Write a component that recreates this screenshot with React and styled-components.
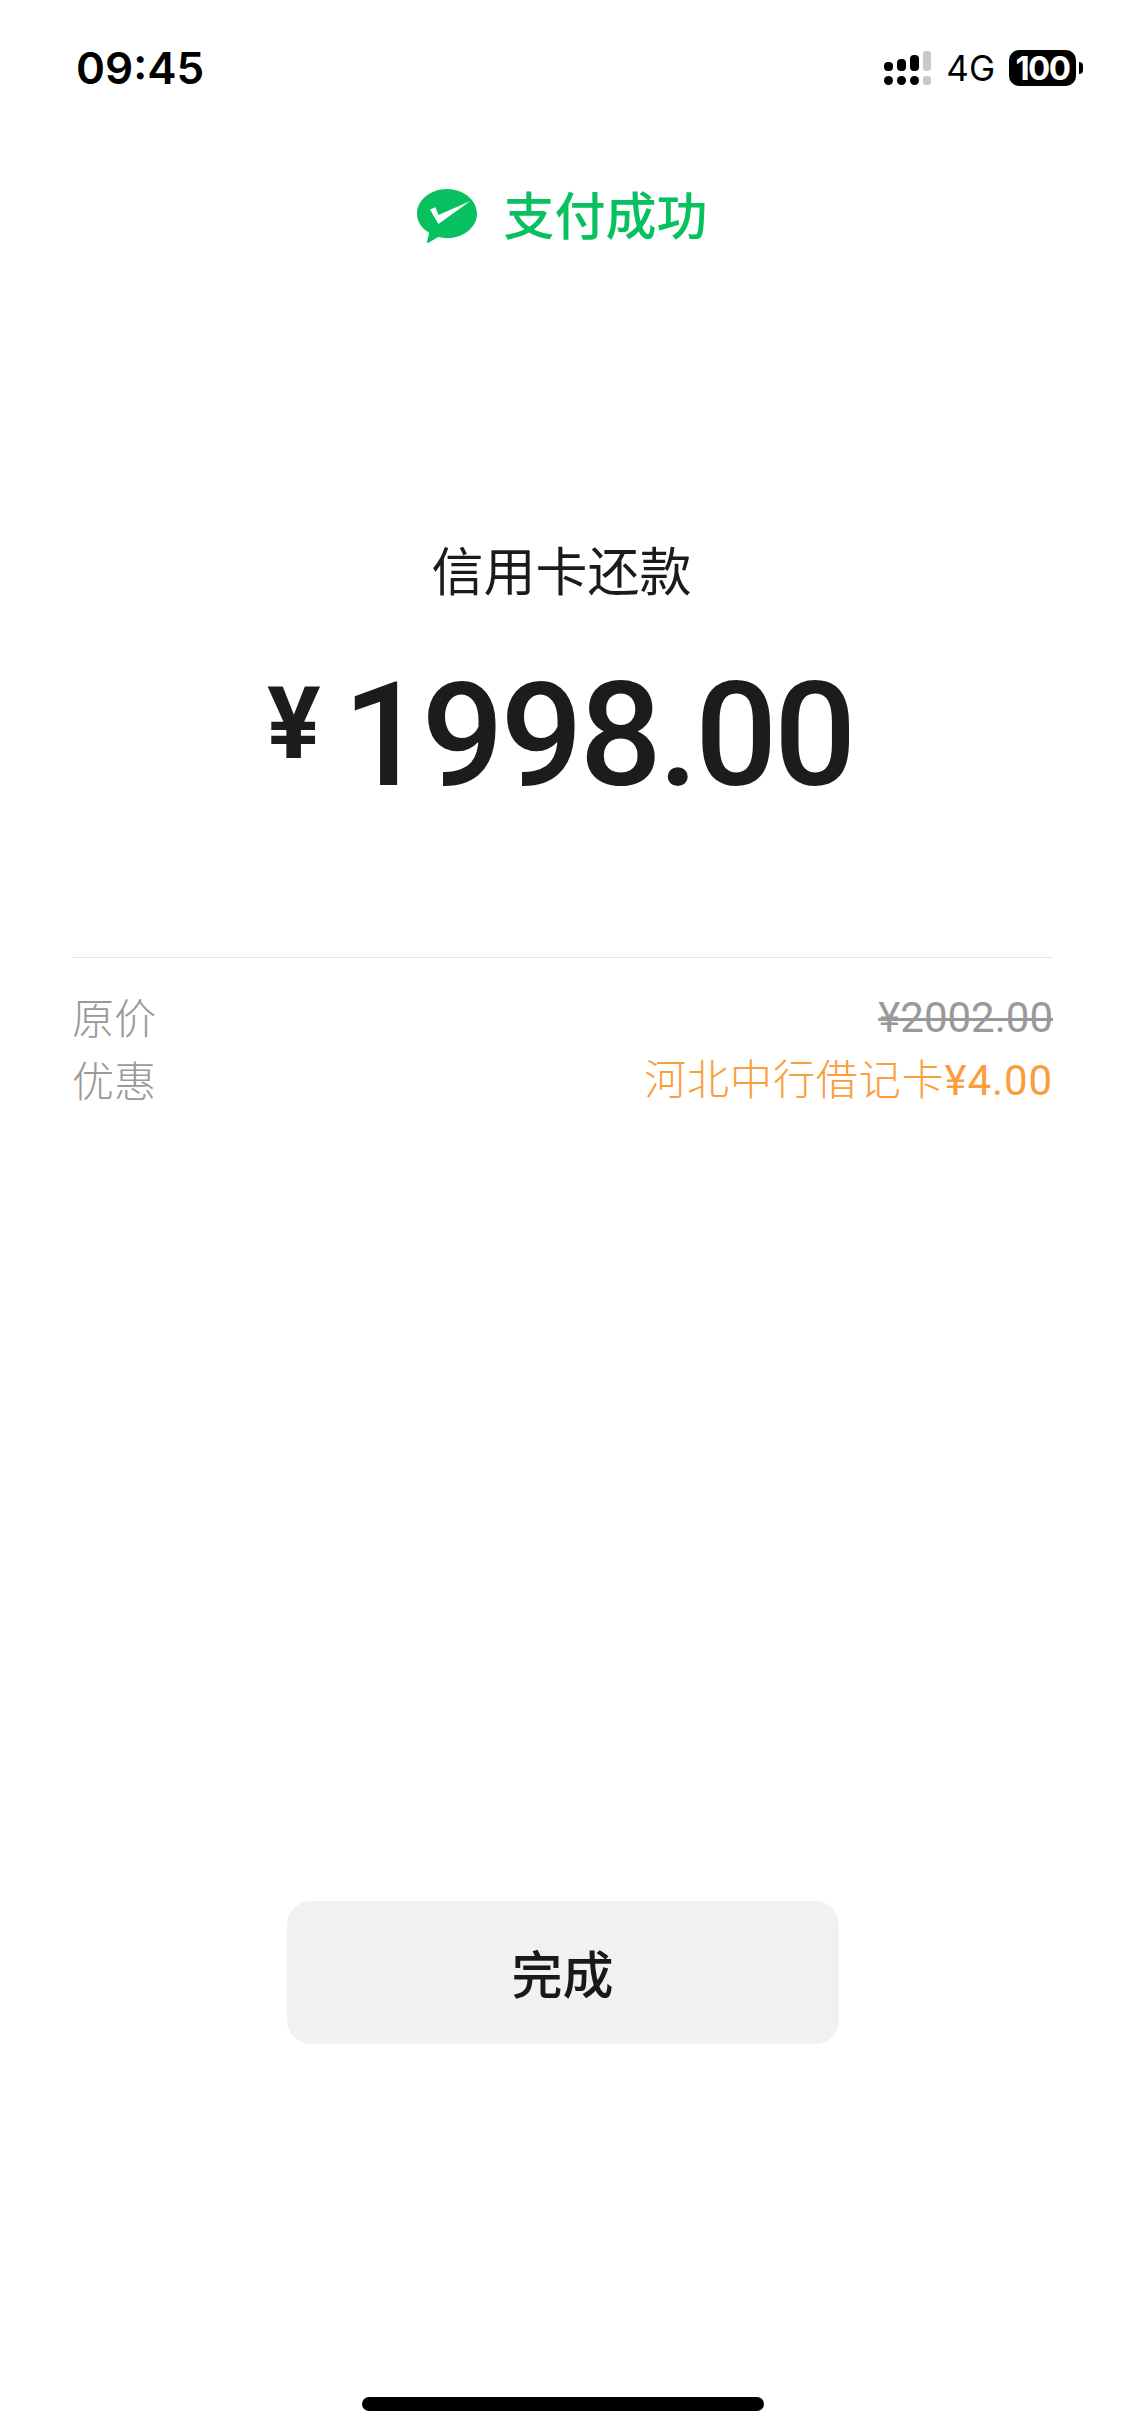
import React from "react";
import styled, { createGlobalStyle } from "styled-components";

const CJK = '"Noto Sans CJK SC", "Noto Sans", sans-serif';
const NUM = 'Roboto, "Noto Sans CJK SC", sans-serif';

const Global = createGlobalStyle`
  html, body { margin: 0; padding: 0; background: #fff; }
  body { font-family: ${CJK}; }
`;

const Page = styled.div`
  width: 1125px;
  height: 2436px;
  background: #fff;
  display: flex;
  flex-direction: column;
  overflow: hidden;
`;

const StatusBar = styled.div`
  height: 174px;
  box-sizing: border-box;
  padding: 48px 49px 0 76px;
  display: flex;
  justify-content: space-between;
  align-items: flex-start;
`;

const Clock = styled.div`
  font: 600 44px/40px Inter, sans-serif;
  color: #000;
`;

const Indicators = styled.div`
  display: flex;
  align-items: center;
  height: 40px;
`;

const NetworkLabel = styled.span`
  font: 400 35px/40px Inter, sans-serif;
  color: #000;
  margin: 0 14px 0 15px;
`;

const Battery = styled.div`
  width: 67px;
  height: 36px;
  border-radius: 10px;
  background: #000;
  color: #fff;
  font: 700 33px/36px Inter, sans-serif;
  letter-spacing: -1.5px;
  text-align: center;
  position: relative;
  &::after {
    content: "";
    position: absolute;
    right: -7px;
    top: 12px;
    width: 4px;
    height: 12px;
    background: #000;
    border-radius: 0 4px 4px 0;
  }
`;

const ResultHeader = styled.div`
  display: flex;
  justify-content: center;
  align-items: center;
  gap: 26px;
  height: 78px;
  & > svg {
    margin-top: 5px;
  }
`;

const ResultTitle = styled.div`
  font: 500 51px/78px ${CJK};
  color: #07c160;
`;

const Summary = styled.div`
  margin-top: 279px;
  display: flex;
  flex-direction: column;
  align-items: center;
`;

const Merchant = styled.div`
  font: 400 52px/76px ${CJK};
  color: #1b1b1b;
  margin-right: 2px;
`;

const Amount = styled.div`
  margin-top: 53px;
  margin-right: 5px;
  display: flex;
  align-items: flex-start;
  gap: 22px;
  color: #1c1c1c;
  height: 150px;
`;

const Currency = styled.span`
  font: 700 100px/150px ${NUM};
  margin-top: -11px;
`;

const Figure = styled.span`
  font: 500 145px/150px ${NUM};
  letter-spacing: -3.5px;
`;

const Details = styled.div`
  margin: 147px 72px 0 72px;
  padding-top: 26px;
  border-top: 1px solid #e6e6e6;
`;

const DetailRow = styled.div`
  display: flex;
  justify-content: space-between;
  align-items: center;
  height: 63px;
  font: 300 42px/63px ${CJK};
  color: ${(p) => p.$tone || "#999"};
`;

const RowLabel = styled.span`
  color: #999;
  margin-top: ${(p) => p.$nudge || 0};
`;

const OldPrice = styled.span`
  font: 400 42px/63px ${NUM};
  color: #999;
  margin-top: 3px;
  text-decoration: line-through;
  text-decoration-thickness: 3px;
`;

const DiscountText = styled.span`
  letter-spacing: 0.9px;
`;

const Discount = styled.span`
  font: 400 42px/63px ${NUM};
  color: #fa9d3b;
`;

const Actions = styled.div`
  margin-top: 791px;
  display: flex;
  justify-content: center;
`;

const DoneButton = styled.button`
  width: 552px;
  height: 143px;
  border: 0;
  border-radius: 24px;
  background: #f1f1f1;
  color: #191919;
  font: 500 51px/143px ${CJK};
  padding: 0;
`;

const HomeBar = styled.div`
  margin: auto auto 25px;
  width: 402px;
  height: 14px;
  border-radius: 7px;
  background: #000;
`;

const SignalIcon = () => (
  <svg width="47" height="34" viewBox="0 0 47 34">
    <g fill="#000">
      <rect x="0" y="11" width="9" height="9" rx="4" />
      <rect x="13" y="8" width="9" height="12" rx="4" />
      <rect x="26" y="4" width="9" height="16" rx="4" />
      <circle cx="4.500" cy="29.500" r="4.500" />
      <circle cx="17.500" cy="29.500" r="4.500" />
      <circle cx="30.500" cy="29.500" r="4.500" />
    </g>
    <g fill="#c9c9c9">
      <rect x="39" y="0" width="8" height="20" rx="3" />
      <rect x="39" y="25" width="8" height="9" rx="3" />
    </g>
  </svg>
);

const WeChatPayMark = () => (
  <svg width="60" height="54" viewBox="0 0 60 54">
    <path
      d="M30 0C13.400 0 0 11 0 24.800c0 8 4.800 14.800 12.200 19L10 52.800c-.2 1 .7 1.500 1.500 1l9.700-5.700c2.800.7 5.800 1.100 8.800 1.100 16.600 0 30-11 30-24.400S46.600 0 30 0z"
      fill="#07c160"
    />
    <path d="M13 20.500l5.400-2.300L21.500 26 53.400 12 21.400 35z" fill="#fff" />
  </svg>
);

export default function App() {
  return (
    <Page>
      <Global />
      <StatusBar>
        <Clock>09:45</Clock>
        <Indicators>
          <SignalIcon />
          <NetworkLabel>4G</NetworkLabel>
          <Battery>100</Battery>
        </Indicators>
      </StatusBar>
      <ResultHeader>
        <WeChatPayMark />
        <ResultTitle>支付成功</ResultTitle>
      </ResultHeader>
      <Summary>
        <Merchant>信用卡还款</Merchant>
        <Amount>
          <Currency>¥</Currency>
          <Figure>1998.00</Figure>
        </Amount>
      </Summary>
      <Details>
        <DetailRow>
          <RowLabel>原价</RowLabel>
          <OldPrice>¥2002.00</OldPrice>
        </DetailRow>
        <DetailRow $tone="#fa9d3b">
          <RowLabel>优惠</RowLabel>
          <DiscountText>
            河北中行借记卡<Discount>¥4.00</Discount>
          </DiscountText>
        </DetailRow>
      </Details>
      <Actions>
        <DoneButton>完成</DoneButton>
      </Actions>
      <HomeBar />
    </Page>
  );
}
